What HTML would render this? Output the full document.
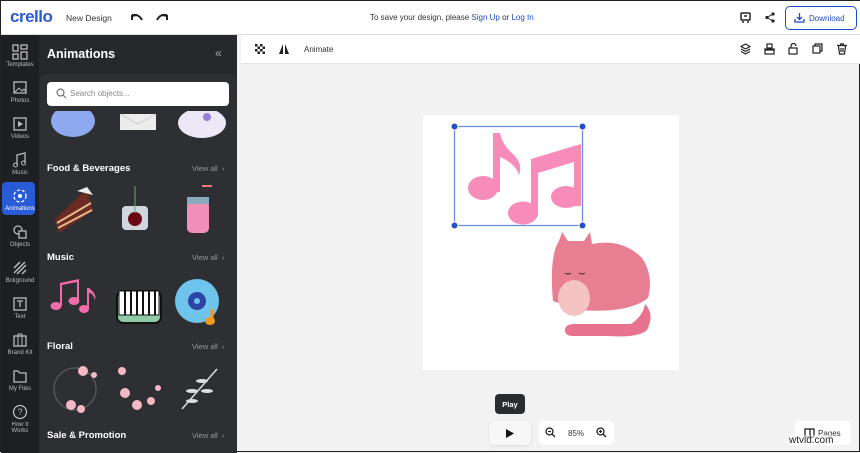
<!DOCTYPE html>
<html><head><meta charset="utf-8"><style>
*{box-sizing:border-box;margin:0;padding:0}
body{width:860px;height:452px;overflow:hidden;font-family:"Liberation Sans",sans-serif;background:#f2f2f2;position:relative;border:1px solid #222}
.top{position:absolute;left:0;top:0;width:860px;height:34px;background:#fff;border-bottom:1px solid #ddd}
.rail{position:absolute;left:0;top:34px;width:38px;height:418px;background:#1e1f22}
.panel{position:absolute;left:38px;top:34px;width:198px;height:418px;background:#27282c}
.list{position:absolute;left:38px;top:73px;width:198px;height:379px;background:#2e2f33;border-radius:8px 8px 0 0}
.tb{position:absolute;left:240px;top:34px;width:620px;height:29px;background:#fff;border-bottom:1px solid #e3e3e3}
.ri{position:absolute;left:0;width:38px;text-align:center;color:#bbb;font-size:6px}
.ri svg{display:block;margin:0 auto 2px}
.sec{position:absolute;left:46px;color:#fff;font-weight:bold;font-size:9.5px}
.va{position:absolute;left:191px;color:#999;font-size:7.5px}
.t{position:absolute;font-size:8px;color:#333}
</style></head><body>
<div class="top">
<div style="position:absolute;left:9px;top:6px;font-size:17px;font-weight:bold;color:#2a5bd7;letter-spacing:-0.5px">crello</div>
<div class="t" style="left:65px;top:12px;font-size:8.5px">New Design</div>
<svg style="position:absolute;left:129px;top:11px" width="14" height="10"><path d="M2 3 L2 8 M2 3 L7 3 M3 4 Q8 1 12 8" stroke="#222" stroke-width="2" fill="none"/></svg>
<svg style="position:absolute;left:154px;top:11px" width="14" height="10"><path d="M12 3 L12 8 M12 3 L7 3 M11 4 Q6 1 2 8" stroke="#222" stroke-width="2" fill="none"/></svg>
<div class="t" style="left:369px;top:12px">To save your design, please <span style="color:#1d4fc4">Sign Up</span> or <span style="color:#1d4fc4">Log In</span></div>
<svg style="position:absolute;left:739px;top:11px" width="11" height="12"><rect x="1" y="1" width="9" height="7" rx="1" stroke="#222" stroke-width="1.5" fill="none"/><path d="M4 4h3M3 9v2M8 9v2" stroke="#222" stroke-width="1.5"/></svg>
<svg style="position:absolute;left:764px;top:11px" width="10" height="11"><circle cx="8" cy="2" r="1.6" fill="#222"/><circle cx="2" cy="5.5" r="1.6" fill="#222"/><circle cx="8" cy="9" r="1.6" fill="#222"/><path d="M8 2L2 5.5L8 9" stroke="#222" fill="none"/></svg>
<div style="position:absolute;left:784px;top:5px;width:72px;height:24px;border:1px solid #1d4fc4;border-radius:5px;color:#1d4fc4;font-size:8px;padding:7px 0 0 23px">Download</div>
<svg style="position:absolute;left:793px;top:11px" width="11" height="11"><path d="M5.5 1v6M3 5l2.5 2.5L8 5M1 7v3h9V7" stroke="#1d4fc4" stroke-width="1.3" fill="none"/></svg>
</div>
<div class="tb">
<svg style="position:absolute;left:14px;top:9px" width="10" height="10"><g fill="#222"><rect x="0" y="0" width="2.5" height="2.5"/><rect x="5" y="0" width="2.5" height="2.5"/><rect x="2.5" y="2.5" width="2.5" height="2.5"/><rect x="7.5" y="2.5" width="2.5" height="2.5"/><rect x="0" y="5" width="2.5" height="2.5"/><rect x="5" y="5" width="2.5" height="2.5"/><rect x="2.5" y="7.5" width="2.5" height="2.5"/><rect x="7.5" y="7.5" width="2.5" height="2.5"/></g></svg>
<svg style="position:absolute;left:38px;top:9px" width="10" height="10"><path d="M4 0L0 10H4Z" fill="#222"/><path d="M6 0L10 10H6Z" fill="#222"/></svg>
<div class="t" style="left:63px;top:10px">Animate</div>
<svg style="position:absolute;left:499px;top:8px" width="11" height="12"><path d="M5.5 1L10 3.5 5.5 6 1 3.5ZM1 6l4.5 2.5L10 6M1 8.5l4.5 2.5L10 8.5" stroke="#222" stroke-width="1.2" fill="none"/></svg>
<svg style="position:absolute;left:523px;top:8px" width="11" height="12"><rect x="3" y="1" width="5" height="4" stroke="#222" fill="none" stroke-width="1.2"/><rect x="1" y="7" width="9" height="4" stroke="#222" fill="none" stroke-width="1.2"/><path d="M0 6h11" stroke="#222"/></svg>
<svg style="position:absolute;left:547px;top:8px" width="10" height="12"><path d="M3 5V3a2.5 2.5 0 0 1 5 0" stroke="#222" fill="none" stroke-width="1.2"/><rect x="1" y="5" width="8" height="6" stroke="#222" fill="none" stroke-width="1.2"/></svg>
<svg style="position:absolute;left:571px;top:8px" width="11" height="11"><rect x="1" y="3" width="7" height="7" stroke="#222" fill="none" stroke-width="1.2"/><path d="M3 3V1h7v7H8" stroke="#222" fill="none" stroke-width="1.2"/></svg>
<svg style="position:absolute;left:596px;top:8px" width="10" height="12"><path d="M0 2.5h10M3.5 2.5V1h3v1.5M1.5 3l1 8h5l1-8M4 5v4M6 5v4" stroke="#222" fill="none" stroke-width="1.2"/></svg>
</div>
<div class="rail">
<div class="ri" style="top:9px"><svg width="16" height="16"><g stroke="#bbb" fill="none" stroke-width="1.3"><rect x="1" y="1" width="5" height="6"/><rect x="9" y="1" width="6" height="4"/><rect x="1" y="10" width="5" height="5"/><rect x="9" y="8" width="6" height="7"/></g></svg>Templates</div>
<div class="ri" style="top:45px"><svg width="16" height="16"><rect x="2" y="2" width="12" height="11" stroke="#bbb" fill="none" stroke-width="1.3"/><path d="M3 12l4-4 3 3 2-2 2 3" stroke="#bbb" fill="none"/></svg>Photos</div>
<div class="ri" style="top:81px"><svg width="16" height="16"><rect x="2" y="2" width="12" height="12" stroke="#bbb" fill="none" stroke-width="1.3"/><path d="M6 5v6l5-3z" fill="#bbb"/></svg>Videos</div>
<div class="ri" style="top:117px"><svg width="16" height="16"><path d="M5 13V3l8-2v10" stroke="#bbb" fill="none" stroke-width="1.3"/><circle cx="3.5" cy="13" r="2" stroke="#bbb" fill="none"/><circle cx="11.5" cy="11" r="2" stroke="#bbb" fill="none"/></svg>Music</div>
<div style="position:absolute;left:1px;top:147px;width:33px;height:33px;background:#2a5bd7;border-radius:4px"></div>
<div class="ri" style="top:153px;color:#fff"><svg width="16" height="16"><circle cx="8" cy="8" r="6" stroke="#fff" fill="none" stroke-width="1.3" stroke-dasharray="3 2"/><circle cx="8" cy="8" r="2" fill="#fff"/></svg>Animations</div>
<div class="ri" style="top:189px"><svg width="16" height="16"><circle cx="6" cy="6" r="4" stroke="#bbb" fill="none" stroke-width="1.3"/><rect x="7" y="7" width="7" height="7" stroke="#bbb" fill="#1e1f22" stroke-width="1.3"/></svg>Objects</div>
<div class="ri" style="top:225px"><svg width="16" height="16"><path d="M2 8L8 2M2 13L13 2M5 14L14 5M10 14l4-4" stroke="#bbb" stroke-width="1.5"/></svg>Bckground</div>
<div class="ri" style="top:261px"><svg width="16" height="16"><rect x="2" y="2" width="12" height="12" stroke="#bbb" fill="none" stroke-width="1.3"/><path d="M5 5h6M8 5v6" stroke="#bbb" stroke-width="1.3"/></svg>Text</div>
<div class="ri" style="top:297px"><svg width="16" height="16"><rect x="2" y="4" width="12" height="10" stroke="#bbb" fill="none" stroke-width="1.3"/><path d="M6 4V2h4v2M6 4v10M10 4v10" stroke="#bbb" fill="none"/></svg>Brand Kit</div>
<div class="ri" style="top:333px"><svg width="16" height="16"><path d="M2 3h4l2 2h6v9H2z" stroke="#bbb" fill="none" stroke-width="1.3"/></svg>My Files</div>
<div class="ri" style="top:369px"><svg width="16" height="16"><circle cx="8" cy="8" r="6.5" stroke="#bbb" fill="none" stroke-width="1.3"/><text x="8" y="11" font-size="9" fill="#bbb" text-anchor="middle" font-family="Liberation Sans">?</text></svg>How It<br>Works</div>
</div>
<div class="panel"></div>
<div style="position:absolute;left:46px;top:46px;color:#fff;font-weight:bold;font-size:12.5px">Animations</div>
<div style="position:absolute;left:214px;top:45px;color:#aaa;font-size:12px">«</div>
<div class="list"></div>
<div style="position:absolute;left:46px;top:81px;width:182px;height:24px;background:#fff;border-radius:4px;font-size:8px;color:#888;padding:7px 0 0 23px">Search objects...</div>
<svg style="position:absolute;left:55px;top:87px" width="11" height="11"><circle cx="4.5" cy="4.5" r="3.5" stroke="#777" fill="none" stroke-width="1.2"/><path d="M7 7l3 3" stroke="#777" stroke-width="1.2"/></svg>
<svg style="position:absolute;left:46px;top:110px" width="190" height="30"><ellipse cx="26" cy="10" rx="22" ry="16" fill="#8fa9f0"/><rect x="73" y="3" width="36" height="16" fill="#ececec"/><path d="M73 3l18 10 18-10" stroke="#ccc" fill="none"/><ellipse cx="155" cy="12" rx="24" ry="15" fill="#ece8f8"/><circle cx="160" cy="6" r="4" fill="#9b7cd8"/></svg>
<div class="sec" style="top:162px">Food &amp; Beverages</div><div class="va" style="top:163px">View all &nbsp;›</div>
<svg style="position:absolute;left:46px;top:180px" width="190" height="55"><path d="M8 38L40 8 46 30 12 52z" fill="#6b2a22"/><path d="M10 42l34-20M11 47l34-18" stroke="#e4b88a" stroke-width="2"/><path d="M30 10l10-4 6 8z" fill="#eee"/><rect x="75" y="25" width="26" height="24" rx="4" fill="#cfd6dd"/><circle cx="88" cy="38" r="7" fill="#6b0a14"/><path d="M88 5v27" stroke="#6a7" /><rect x="140" y="20" width="22" height="32" rx="5" fill="#f090b8"/><rect x="140" y="16" width="22" height="7" fill="#8ab"/><path d="M155 5l10 0" stroke="#e77" stroke-width="2"/></svg>
<div class="sec" style="top:251px">Music</div><div class="va" style="top:252px">View all &nbsp;›</div>
<svg style="position:absolute;left:46px;top:270px" width="190" height="55"><g fill="#f06ca8"><ellipse cx="9" cy="35" rx="5.5" ry="4"/><ellipse cx="27" cy="30" rx="5.5" ry="4"/><path d="M13 35V12l19-4v22h-2V11l-15 3v21z"/><ellipse cx="37" cy="38" rx="5" ry="4"/><path d="M40 38V17l2 0q8 6 6 12q-2-7-6-7v16z"/></g><rect x="70" y="20" width="44" height="32" rx="6" fill="#8ec9a8" stroke="#111" stroke-width="2"/><rect x="72" y="20" width="40" height="24" fill="#fff" stroke="#111"/><g stroke="#111" stroke-width="2"><path d="M78 20v24M84 20v24M90 20v24M96 20v24M102 20v24M108 20v24"/></g><circle cx="150" cy="30" r="22" fill="#6ec4ea"/><circle cx="150" cy="30" r="9" fill="#2c46a8"/><circle cx="150" cy="30" r="3" fill="#6ec4ea"/><path d="M165 38v12" stroke="#f29a20" stroke-width="3"/><ellipse cx="163" cy="50" rx="5" ry="4" fill="#f29a20"/></svg>
<div class="sec" style="top:340px">Floral</div><div class="va" style="top:341px">View all &nbsp;›</div>
<svg style="position:absolute;left:46px;top:360px" width="190" height="55"><circle cx="28" cy="28" r="21" stroke="#555" fill="none" stroke-width="1.5"/><g fill="#f4b8c4"><circle cx="36" cy="10" r="5"/><circle cx="24" cy="44" r="5"/><circle cx="34" cy="48" r="4"/><circle cx="47" cy="14" r="3"/></g><g fill="#f4b8c4"><circle cx="75" cy="10" r="4"/><circle cx="78" cy="32" r="5"/><circle cx="90" cy="44" r="5"/><circle cx="104" cy="40" r="4"/><circle cx="111" cy="27" r="3"/></g><path d="M135 48L170 8" stroke="#ddd" stroke-width="1.5"/><g fill="#ddd"><ellipse cx="145" cy="30" rx="6" ry="2"/><ellipse cx="155" cy="20" rx="6" ry="2"/><ellipse cx="160" cy="30" rx="6" ry="2"/><ellipse cx="145" cy="40" rx="6" ry="2"/></g></svg>
<div class="sec" style="top:429px">Sale &amp; Promotion</div><div class="va" style="top:430px">View all &nbsp;›</div>

<div style="position:absolute;left:422px;top:114px;width:256px;height:255px;background:#fff"></div>
<svg style="position:absolute;left:440px;top:115px" width="240" height="230">
<g fill="#f78cbb">
<ellipse cx="42" cy="72" rx="15" ry="12"/><path d="M52 76V17h7q2 12 14 22q9 9 5 20q-4-12-19-18v35z"/>
<ellipse cx="82" cy="97" rx="15" ry="11.5"/><path d="M90 100V43l50-15v62h-7V46l-36 11v43z"/>
<ellipse cx="125" cy="81" rx="15" ry="11"/></g>
<rect x="13.5" y="10.5" width="128" height="99" fill="none" stroke="#6a8fe0" stroke-width="1.3"/>
<g fill="#2252c8" stroke="#fff" stroke-width="1"><circle cx="13.5" cy="10.5" r="3.5"/><circle cx="141.5" cy="10.5" r="3.5"/><circle cx="13.5" cy="109.5" r="3.5"/><circle cx="141.5" cy="109.5" r="3.5"/></g>
<path d="M132 220q-8 0-8-6q0-6 10-6l56 0q12-8 14-20q10 10 2 26q-8 8-40 6z" fill="#e8738e"/>
<path d="M112 185q-4-45 6-60l3-9 6 9h16l6-9 2 12q30-6 50 14q12 18 6 40q-20 16-70 12z" fill="#e87e92"/>
<ellipse cx="133" cy="182" rx="16" ry="18" fill="#f6c3c3"/>
<path d="M124 157q3 2 6 0M138 157q3 2 6 0" stroke="#333" fill="none"/>
</svg>

<div style="position:absolute;left:494px;top:393px;width:30px;height:20px;background:#2a2c31;border-radius:4px;color:#fff;font-size:7.5px;font-weight:bold;padding-top:6px;text-align:center">Play</div>
<div style="position:absolute;left:488px;top:420px;width:42px;height:24px;background:#f7f7f7;border-radius:5px;box-shadow:0 1px 3px rgba(0,0,0,.1)"></div>
<svg style="position:absolute;left:505px;top:428px" width="8" height="9"><path d="M0 0L8 4.5 0 9z" fill="#111"/></svg>
<div style="position:absolute;left:538px;top:420px;width:75px;height:24px;background:#fff;border-radius:5px"></div>
<svg style="position:absolute;left:544px;top:426px" width="11" height="11"><circle cx="4.5" cy="4.5" r="3.5" stroke="#222" fill="none" stroke-width="1.3"/><path d="M7 7l3 3M3 4.5h3" stroke="#222" stroke-width="1.3"/></svg>
<div class="t" style="left:567px;top:428px">85%</div>
<svg style="position:absolute;left:595px;top:426px" width="11" height="11"><circle cx="4.5" cy="4.5" r="3.5" stroke="#222" fill="none" stroke-width="1.3"/><path d="M7 7l3 3M3 4.5h3M4.5 3v3" stroke="#222" stroke-width="1.3"/></svg>
<div style="position:absolute;left:794px;top:420px;width:56px;height:24px;background:#fff;border-radius:5px"></div>
<svg style="position:absolute;left:803px;top:427px" width="11" height="10"><rect x="1" y="1" width="9" height="8" stroke="#222" fill="none" stroke-width="1.3"/><path d="M6 1v8" stroke="#222" stroke-width="1.3"/></svg>
<div class="t" style="left:817px;top:428px">Pages</div>
<div style="position:absolute;left:788px;top:434px;font-size:10px;color:#222;background:rgba(255,255,255,.6)">wtvid.com</div>
</body></html>
